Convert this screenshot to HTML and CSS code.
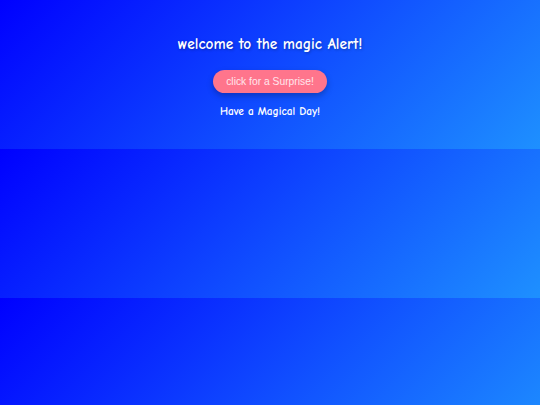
FILE: index.html
```html
<!DOCTYPE html>
<html>
<head>
<meta charset="utf-8">
<link rel="stylesheet" href="styles.css">
</head>
<body>
<div class="container">
  <h1 class="title">welcome to the magic Alert!</h1>
  <button class="magic-btn">click for a Surprise!</button>
  <p class="message">Have a Magical Day!</p>
</div>
</body>
</html>
```
FILE: styles.css
```css
body {
  margin: 0;
  padding: 20px;
  font-family: "Comic Sans MS", "Comic Neue", cursive;
  background: linear-gradient(135deg, #0000ff, #1e90ff);
  color: #ffffff;
  text-align: center;
}
.container {
  display: flex;
  flex-direction: column;
  align-items: center;
}
.title {
  font-size: 15.3px;
  line-height: 20px;
  margin: 14px 0 16px;
  text-shadow: 1px 1px 3px rgba(0,0,0,0.3);
}
.magic-btn {
  font-family: "Liberation Sans", Arial, sans-serif;
  font-size: 10.3px;
  line-height: 13px;
  color: #ffe6ec;
  background: #ff758c;
  border: none;
  border-radius: 20px;
  padding: 5px 13px;
  box-shadow: 0 3px 6px rgba(0,0,0,0.25);
}
.message {
  font-size: 11.3px;
  line-height: 16px;
  font-weight: bold;
  margin: 11px 0 9px;
}
```
